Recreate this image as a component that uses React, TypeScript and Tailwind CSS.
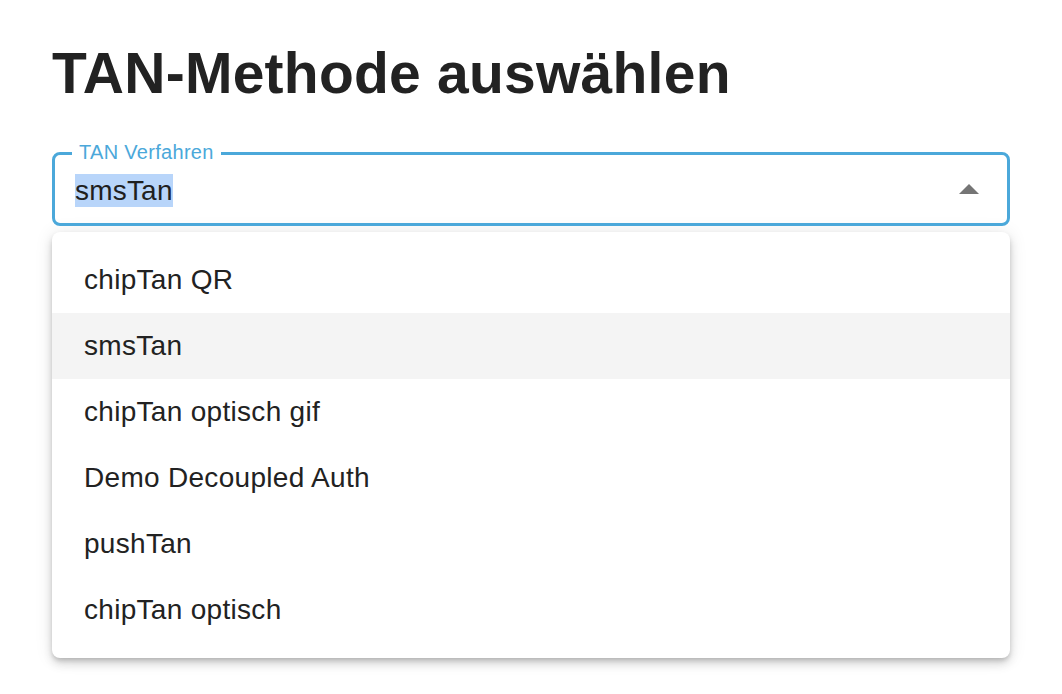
const options = [
  "chipTan QR",
  "smsTan",
  "chipTan optisch gif",
  "Demo Decoupled Auth",
  "pushTan",
  "chipTan optisch",
];

export default function App() {
  const selected = "smsTan";

  return (
    <div
      className="min-h-screen bg-white px-[52px] pt-[39px] text-[#212121]"
      style={{ fontFamily: '"Liberation Sans", Arial, sans-serif' }}
    >
      <h1 className="text-[57px] font-bold leading-[1.2] tracking-[0.25px] text-[#222]">TAN-Methode auswählen</h1>

      <div className="mt-[45px]">
        {/* outlined select, focused */}
        <div className="relative flex h-[74px] items-center rounded-[8px] border-[3px] border-[#4ba8da] pl-[20px] pr-[28px] pt-[3px]">
          <span className="absolute -top-[15px] left-[17px] bg-white px-[7px] text-[20px] leading-[24px] tracking-[0.3px] text-[#4ba8da]">
            TAN Verfahren
          </span>
          <span className="bg-[#b8d5fa] text-[28px] leading-[33px] tracking-[0.2px] text-[#1f1f1f]">{selected}</span>
          <svg className="ml-auto -mt-[3px]" width="20" height="10" viewBox="0 0 20 10">
            <path d="M0 10 L10 0 L20 10 Z" fill="#757575" />
          </svg>
        </div>

        {/* open menu */}
        <ul className="mt-[6px] rounded-[8px] bg-white py-[15px] shadow-[0_3px_5px_-1px_rgba(0,0,0,0.18),0_6px_10px_0_rgba(0,0,0,0.12),0_1px_18px_0_rgba(0,0,0,0.1)]">
          {options.map((o) => (
            <li
              key={o}
              className={
                "flex h-[66px] items-center px-[32px] text-[28px] leading-[40px] tracking-[0.3px] text-[#222] " +
                (o === selected ? "bg-[#f4f4f4]" : "")
              }
            >
              {o}
            </li>
          ))}
        </ul>
      </div>
    </div>
  );
}
